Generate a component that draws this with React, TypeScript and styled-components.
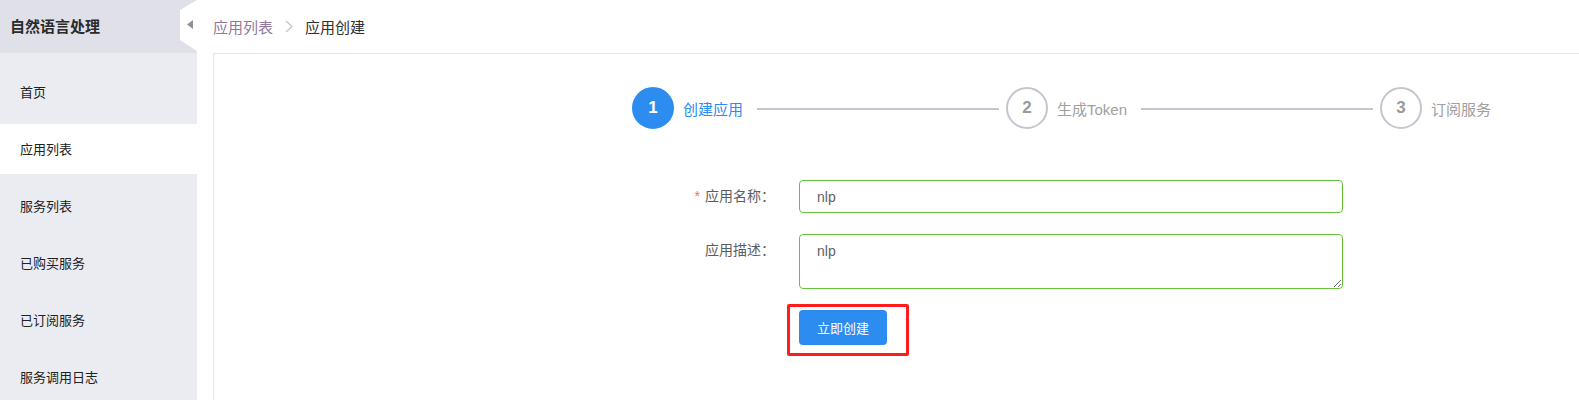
import React from 'react';
import styled, { createGlobalStyle } from 'styled-components';

const FONT = `"Liberation Sans", "Noto Sans CJK SC", sans-serif`;

const GlobalStyle = createGlobalStyle`
  html, body {
    margin: 0;
    padding: 0;
    overflow: hidden;
    background: #fff;
    font-family: ${FONT};
  }
  * {
    box-sizing: border-box;
  }
`;

const menuItems = ['首页', '应用列表', '服务列表', '已购买服务', '已订阅服务', '服务调用日志'];

const steps = [
  { num: 1, title: '创建应用' },
  { num: 2, title: '生成Token' },
  { num: 3, title: '订阅服务' },
];

export default function App() {
  return (
    <>
      <GlobalStyle />
      <SLayout>
        <SSidebar>
          <SSideHeader>自然语言处理</SSideHeader>
          <SCollapseTab>
            <svg width="6" height="9" viewBox="0 0 6 9">
              <path d="M6 0 L0 4.5 L6 9 Z" fill="#8b9099" />
            </svg>
          </SCollapseTab>
          <SMenu>
            {menuItems.map((item) => (
              <SMenuItem key={item} $active={item === '应用列表'}>
                {item}
              </SMenuItem>
            ))}
          </SMenu>
        </SSidebar>

        <SMain>
          <SBreadcrumb>
            <SCrumbLink>应用列表</SCrumbLink>
            <SCrumbSep>
              <svg width="8" height="13" viewBox="0 0 8 13">
                <path d="M1 1 L7 6.5 L1 12" fill="none" stroke="#c0c4cc" strokeWidth="1.3" />
              </svg>
            </SCrumbSep>
            <SCrumbCurrent>应用创建</SCrumbCurrent>
          </SBreadcrumb>

          <SCard>
            <SSteps>
              {steps.map((s, i) => {
                const last = i === steps.length - 1;
                return (
                  <SStep key={s.num} $last={last}>
                    <SStepCircle $active={i === 0}>{s.num}</SStepCircle>
                    <SStepTitle $active={i === 0}>{s.title}</SStepTitle>
                    {!last && <SStepLine />}
                  </SStep>
                );
              })}
            </SSteps>

            <SForm>
              <SFormItem>
                <SLabel>
                  <SRequired>*</SRequired>应用名称：
                </SLabel>
                <SInput readOnly value="nlp" />
              </SFormItem>
              <SFormItem>
                <SLabel>应用描述：</SLabel>
                <STextarea readOnly value="nlp" />
              </SFormItem>
              <SFormItem>
                <SLabel />
                <SButtonWrap>
                  <SButton type="button">立即创建</SButton>
                  <SHighlight />
                </SButtonWrap>
              </SFormItem>
            </SForm>
          </SCard>
        </SMain>
      </SLayout>
    </>
  );
}

const SLayout = styled.div`
  display: flex;
  height: 100vh;
  min-height: 400px;
`;

const SSidebar = styled.aside`
  position: relative;
  width: 197px;
  flex-shrink: 0;
  background: #ebecf1;
  display: flex;
  flex-direction: column;
`;

const SSideHeader = styled.div`
  height: 53px;
  line-height: 53px;
  padding-left: 10px;
  background: #dfe0e8;
  color: #2b2b2b;
  font-size: 15px;
  font-weight: bold;
`;

const SCollapseTab = styled.div`
  position: absolute;
  top: 0;
  right: 0;
  width: 17px;
  height: 51px;
  background: #fff;
  clip-path: polygon(100% 0, 0 10px, 0 40px, 100% 100%);
  display: flex;
  align-items: center;
  justify-content: flex-end;
  padding: 0 4px 3px 0;
`;

const SMenu = styled.ul`
  list-style: none;
  margin: 0;
  padding: 14px 0 0;
  display: flex;
  flex-direction: column;
  gap: 7px;
`;

const SMenuItem = styled.li<{ $active?: boolean }>`
  height: 50px;
  line-height: 51px;
  padding-left: 20px;
  font-size: 13px;
  color: #222;
  background: ${({ $active }) => ($active ? '#fff' : 'transparent')};
`;

const SMain = styled.main`
  flex: 1;
  display: flex;
  flex-direction: column;
  padding-left: 16px;
  background: #fff;
  min-width: 0;
`;

const SBreadcrumb = styled.nav`
  height: 53px;
  display: flex;
  align-items: center;
  font-size: 15px;
`;

const SCrumbLink = styled.span`
  color: #8e7a9c;
`;

const SCrumbSep = styled.span`
  display: flex;
  margin: 0 12px 0 12px;
`;

const SCrumbCurrent = styled.span`
  color: #303133;
`;

const SCard = styled.section`
  flex: 1;
  border-top: 1px solid #e4e4e6;
  border-left: 1px solid #e4e4e6;
  padding: 33px 0 0 418px;
  overflow: hidden;
`;

const SSteps = styled.div`
  display: flex;
`;

const SStep = styled.div<{ $last?: boolean }>`
  width: ${({ $last }) => ($last ? 'auto' : '374px')};
  flex-shrink: 0;
  display: flex;
  align-items: center;
`;

const SStepCircle = styled.div<{ $active?: boolean }>`
  width: 42px;
  height: 42px;
  border-radius: 50%;
  flex-shrink: 0;
  display: flex;
  align-items: center;
  justify-content: center;
  font-family: "Liberation Sans", sans-serif;
  font-size: 17px;
  font-weight: bold;
  border: 2px solid ${({ $active }) => ($active ? '#2d8cf0' : '#c4c6cd')};
  background: ${({ $active }) => ($active ? '#2d8cf0' : '#fff')};
  color: ${({ $active }) => ($active ? '#fff' : '#9a9a9a')};
`;

const SStepTitle = styled.span<{ $active?: boolean }>`
  margin-left: 9px;
  font-size: 15px;
  white-space: nowrap;
  color: ${({ $active }) => ($active ? '#2d8cf0' : '#a0a0a0')};
`;

const SStepLine = styled.div`
  flex: 1;
  height: 2px;
  margin: 1px 7px 0 14px;
  background: #c5c7cf;
`;

const SForm = styled.form`
  margin: 51px 0 0 -418px;
  display: flex;
  flex-direction: column;
  gap: 21px;
`;

const SFormItem = styled.div`
  display: flex;
  align-items: flex-start;
`;

const SLabel = styled.label`
  width: 561px;
  flex-shrink: 0;
  margin-right: 24px;
  text-align: right;
  font-size: 14px;
  line-height: 33px;
  color: #5a5d63;
`;

const SRequired = styled.span`
  color: #f56c6c;
  margin-right: 5px;
`;

const SInput = styled.input`
  width: 544px;
  height: 33px;
  padding: 0 17px;
  border: 1px solid #67c23a;
  border-radius: 4px;
  font-family: ${FONT};
  font-size: 14px;
  color: #606266;
  outline: none;
`;

const STextarea = styled.textarea`
  width: 544px;
  height: 55px;
  padding: 4px 17px;
  border: 1px solid #67c23a;
  border-radius: 4px;
  font-family: ${FONT};
  font-size: 14px;
  line-height: 24px;
  color: #606266;
  outline: none;
`;

const SButtonWrap = styled.div`
  position: relative;
`;

const SButton = styled.button`
  width: 88px;
  height: 35px;
  border: none;
  border-radius: 4px;
  background: #2d8cf0;
  color: #fff;
  font-family: ${FONT};
  font-size: 13px;
  cursor: pointer;
  display: block;
`;

const SHighlight = styled.div`
  position: absolute;
  left: -12px;
  top: -6px;
  width: 122px;
  height: 52px;
  border: 3px solid #ff1c1c;
  border-radius: 2px;
  pointer-events: none;
`;
